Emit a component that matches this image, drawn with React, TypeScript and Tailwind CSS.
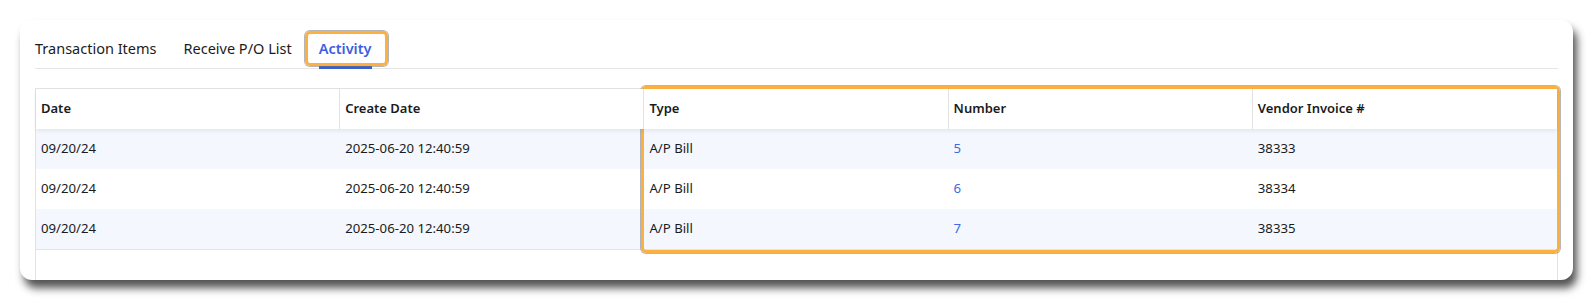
import React from "react";

const columns = ["Date", "Create Date", "Type", "Number", "Vendor Invoice #"];

const rows = [
  { date: "09/20/24", created: "2025-06-20 12:40:59", type: "A/P Bill", number: "5", invoice: "38333" },
  { date: "09/20/24", created: "2025-06-20 12:40:59", type: "A/P Bill", number: "6", invoice: "38334" },
  { date: "09/20/24", created: "2025-06-20 12:40:59", type: "A/P Bill", number: "7", invoice: "38335" },
];

const tabs = ["Transaction Items", "Receive P/O List", "Activity"];

const App = () => {
  return (
    <div className="w-[1594px] h-[300px] bg-white pt-[20px] pl-[20px] font-['Noto_Sans','Open_Sans',sans-serif] text-[#1b1b1b]">
      <div className="relative flex flex-col w-[1553px] h-[260px] rounded-[12px] bg-white px-[15px] pt-[18px] overflow-hidden shadow-[4px_8px_8px_rgba(0,0,0,0.68)]">
        <div className="flex gap-[27px] border-b border-[#e6e6e6]">
          {tabs.map((tab) => (
            <div
              key={tab}
              className={
                tab === "Activity"
                  ? "relative pb-[10px] text-[14.5px] leading-[20px] font-semibold text-[#3b5fe0]"
                  : "relative pb-[10px] text-[14.5px] leading-[20px] text-[#1b1b1b]"
              }
            >
              {tab}
              {tab === "Activity" && (
                <div className="absolute left-0 right-0 bottom-[-1px] h-[3px] bg-[#3461db]" />
              )}
            </div>
          ))}
        </div>

        <div className="mt-[19px] flex-1 border border-b-0 border-[#e3e3e3]">
          <div className="relative z-10 grid grid-cols-5 h-[40px] bg-white shadow-[0_2px_4px_rgba(0,0,0,0.07)]">
            {columns.map((col, i) => (
              <div
                key={col}
                className={
                  i < columns.length - 1
                    ? "flex items-center px-[5px] text-[13px] font-semibold border-r border-[#e3e3e3]"
                    : "flex items-center px-[5px] text-[13px] font-semibold"
                }
              >
                {col}
              </div>
            ))}
          </div>
          {rows.map((row, i) => (
            <div
              key={row.number}
              className={
                i % 2 === 0
                  ? "grid grid-cols-5 h-[40px] bg-[#f4f7fd] text-[13.2px]"
                  : "grid grid-cols-5 h-[40px] bg-white text-[13.2px]"
              }
            >
              <div className="flex items-center px-[5px]">{row.date}</div>
              <div className="flex items-center px-[5px]">{row.created}</div>
              <div className="flex items-center px-[5px]">{row.type}</div>
              <div className="flex items-center px-[5px] text-[#3b6be0]">{row.number}</div>
              <div className="flex items-center px-[5px]">{row.invoice}</div>
            </div>
          ))}
          <div className="border-t border-[#e3e3e3]" />
        </div>

        {/* annotation boxes */}
        <div className="absolute left-[285px] top-[11px] w-[83px] h-[35px] rounded-[5px] border-[3px] border-[#fbb040] shadow-[0_0_0_1px_rgba(110,110,110,0.5)]" />
        <div className="absolute left-[621px] top-[66px] w-[919px] h-[167px] rounded-[5px] border-[3px] border-[#fbb040] shadow-[0_0_0_1px_rgba(110,110,110,0.5)]" />
      </div>
    </div>
  );
};

export default App;
